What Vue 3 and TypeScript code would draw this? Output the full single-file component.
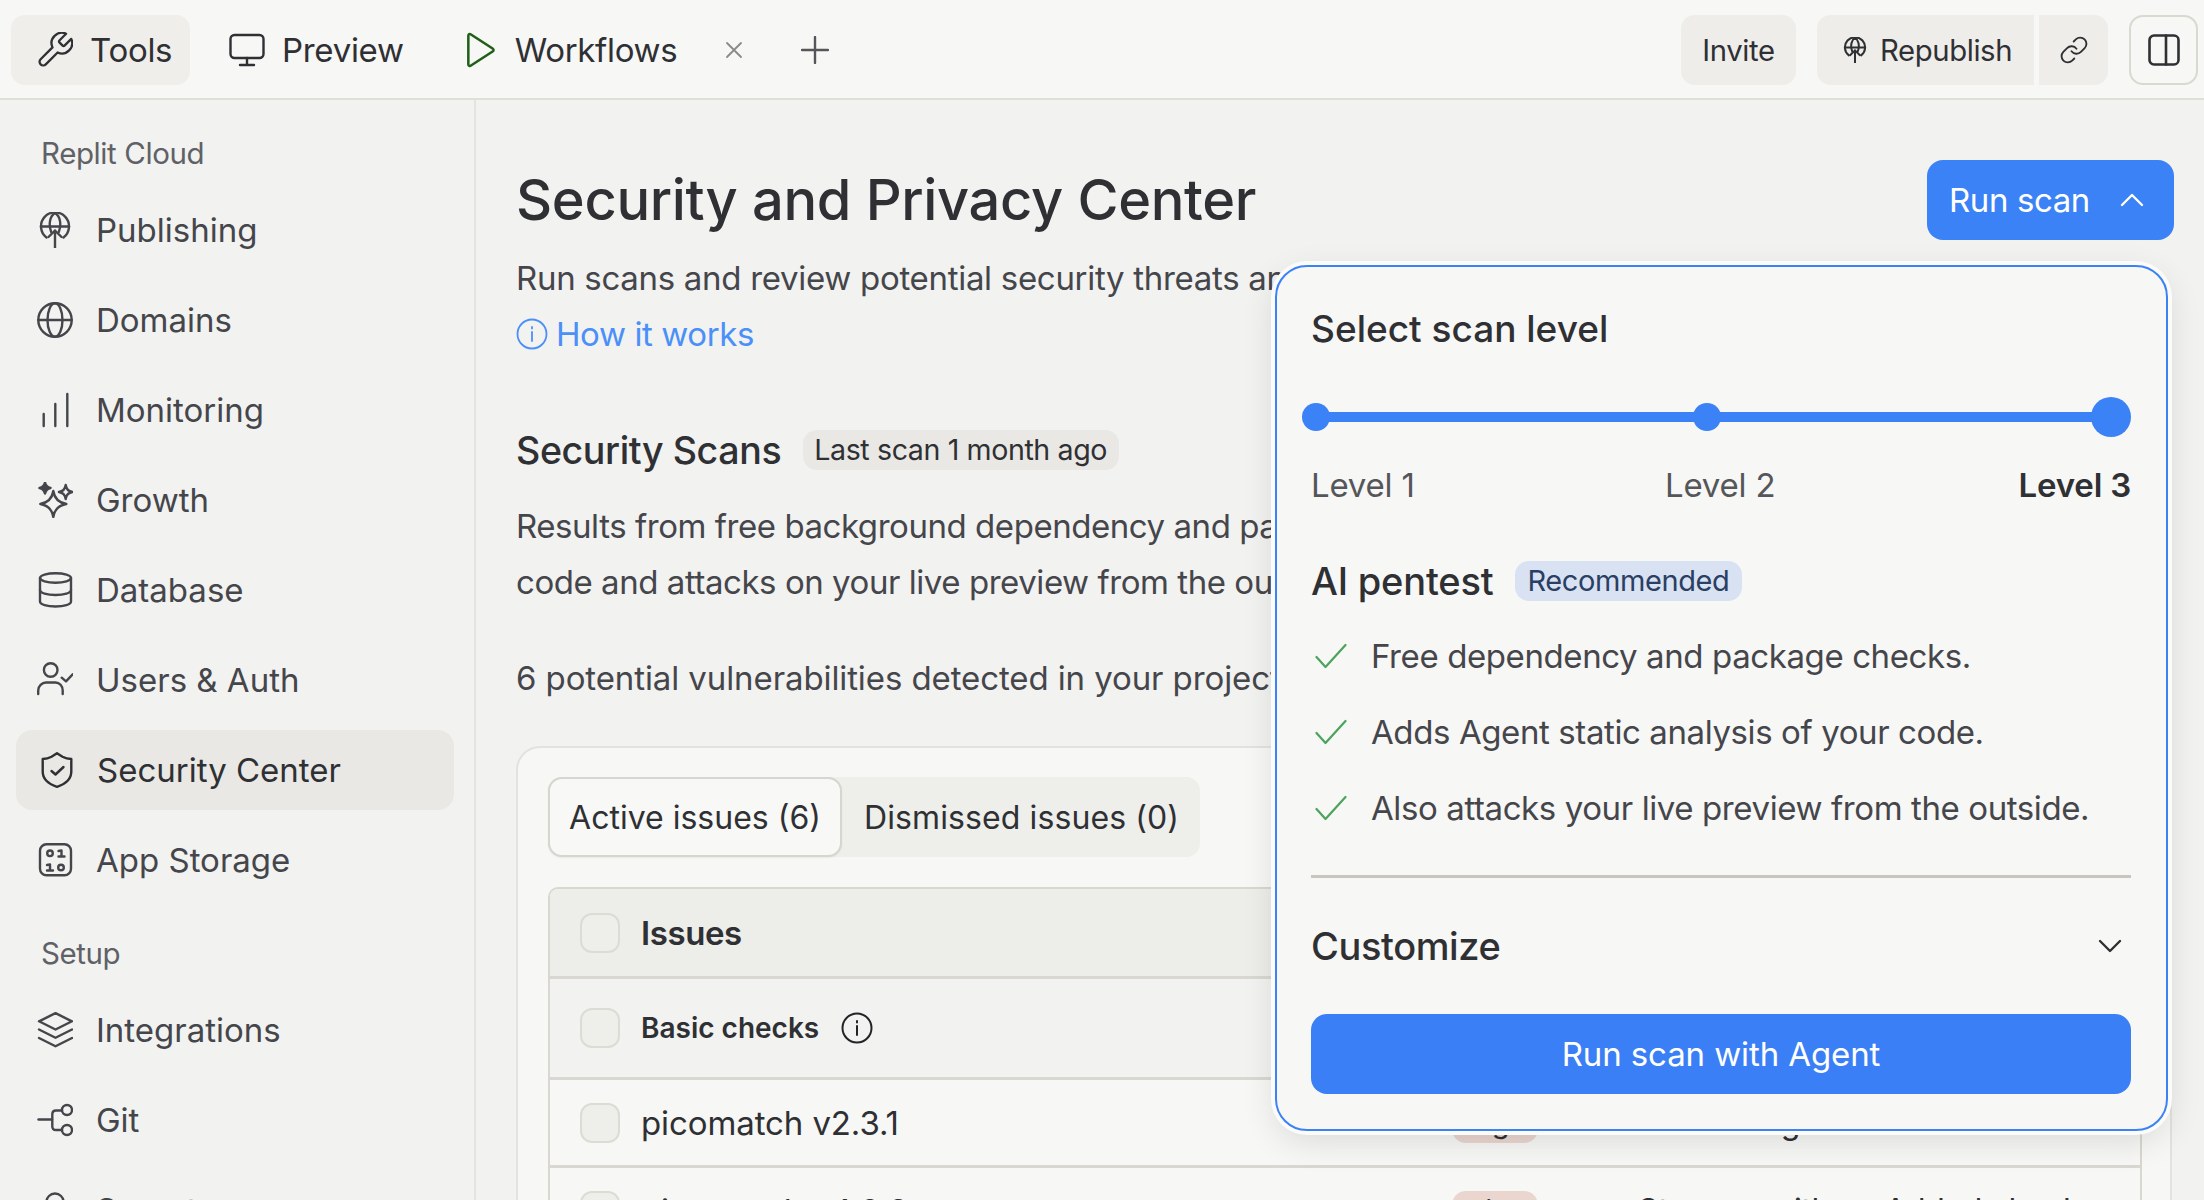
<script setup lang="ts">
type NavItem = { label: string; icon: string; active?: boolean }

const cloudItems: NavItem[] = [
  { label: 'Publishing', icon: 'publish' },
  { label: 'Domains', icon: 'globe' },
  { label: 'Monitoring', icon: 'bars' },
  { label: 'Growth', icon: 'sparkle' },
  { label: 'Database', icon: 'db' },
  { label: 'Users & Auth', icon: 'user' },
  { label: 'Security Center', icon: 'shield', active: true },
  { label: 'App Storage', icon: 'binary' },
]
const setupItems: NavItem[] = [
  { label: 'Integrations', icon: 'layers' },
  { label: 'Git', icon: 'git' },
  { label: 'Secrets', icon: 'key' },
]
const checks = [
  'Free dependency and package checks.',
  'Adds Agent static analysis of your code.',
  'Also attacks your live preview from the outside.',
]
</script>

<template>
  <div class="app">
    <header class="topbar">
      <nav class="tabs">
        <button class="tab tab-active">
          <svg class="ic36" viewBox="1.5 1.5 21 21"><path d="M14.7 6.3a1 1 0 0 0 0 1.4l1.6 1.6a1 1 0 0 0 1.4 0l3.77-3.77a6 6 0 0 1-7.94 7.94l-6.91 6.91a2.12 2.12 0 0 1-3-3l6.91-6.91a6 6 0 0 1 7.94-7.94l-3.76 3.76z" /></svg>
          <span>Tools</span>
        </button>
        <button class="tab tab-preview">
          <svg class="ic36" viewBox="0 0 36 36"><rect x="1.5" y="3" width="33" height="23" rx="4" /><path d="M18 26v7M11 33h14" /></svg>
          <span>Preview</span>
        </button>
        <button class="tab tab-workflows">
          <svg class="ic-play" viewBox="0 0 30 36"><path d="M3 4.5c0-1.5 1.3-2 2.5-1.2L26 16.6c1.2.8 1.2 2 0 2.8L5.5 32.7C4.3 33.5 3 33 3 31.5z" /></svg>
          <span>Workflows</span>
        </button>
        <svg class="ic-x" viewBox="0 0 18 18"><path d="M2 2l14 14M16 2L2 16" /></svg>
        <svg class="ic-plus" viewBox="0 0 28 28"><path d="M14 1v26M1 14h26" /></svg>
      </nav>
      <div class="actions">
        <button class="act invite">Invite</button>
        <div class="split">
          <button class="act republish">
            <svg class="ic-pub" viewBox="0 0 36 36"><use href="#i-publish" /></svg>
            <span>Republish</span>
          </button>
          <button class="act link">
            <svg class="ic-link" viewBox="0 0 24 24"><path d="M10 13a5 5 0 0 0 7.54.54l3-3a5 5 0 0 0-7.07-7.07l-1.72 1.71" /><path d="M14 11a5 5 0 0 0-7.54-.54l-3 3a5 5 0 0 0 7.07 7.07l1.71-1.71" /></svg>
          </button>
        </div>
        <button class="panel-btn">
          <svg class="ic-panel" viewBox="0 0 32 32"><rect x="1.5" y="1.5" width="29" height="29" rx="4.5" /><path d="M18 1.5v29" /></svg>
        </button>
      </div>
    </header>

    <svg class="defs" width="0" height="0" aria-hidden="true">
      <symbol id="i-publish" viewBox="0 0 36 36">
        <path d="M9.5 25.5A14 14 0 1 1 26.5 25.5" />
        <path d="M4 14.5h28" />
        <path d="M14.2 20C11.2 12 13 4 18 1M21.8 20C24.8 12 23 4 18 1" />
        <path d="M18 36V18.5M11.5 25l6.5-6.5 6.5 6.5" />
      </symbol>
      <symbol id="i-globe" viewBox="0 0 36 36">
        <circle cx="18" cy="18" r="16.7" />
        <ellipse cx="18" cy="18" rx="7.5" ry="16.7" />
        <path d="M1.3 18h33.4" />
      </symbol>
      <symbol id="i-bars" viewBox="0 0 36 36">
        <path d="M6.7 22v12M18.3 12v22M30.3 2v32" />
      </symbol>
      <symbol id="i-sparkle" viewBox="0 0 36 36">
        <path d="M16.3 9Q18 20 29.3 22 18 24 16.3 35 14.6 24 3.3 22 14.6 20 16.3 9Z" />
        <path class="fill" d="M8 0.5Q9 5 13.5 6 9 7 8 11.5 7 7 2.5 6 7 5 8 0.5Z" />
        <path d="M28.7 3Q29.6 9.2 35.5 10 29.6 10.8 28.7 17 27.8 10.8 21.9 10 27.8 9.2 28.7 3Z" />
      </symbol>
      <symbol id="i-db" viewBox="0 0 36 36">
        <ellipse cx="18.5" cy="6" rx="15.5" ry="4.7" />
        <path d="M3 6v23.5C3 32.5 10 34.5 18.5 34.5S34 32.5 34 29.5V6" />
        <path d="M3 18C3 21 10 23 18.5 23S34 21 34 18" />
      </symbol>
      <symbol id="i-user" viewBox="0 0 36 36">
        <circle cx="13.7" cy="8" r="6.8" />
        <path d="M1.2 32v-3.5C1.2 24 5 20.5 9 20.5h9.5c4 0 7.2 3.5 7.2 8V32" />
        <path d="M24.7 15.7l4.3 3.6 6.7-7" />
      </symbol>
      <symbol id="i-shield" viewBox="0 0 36 36">
        <path d="M18 1.2l5.5 3.6c2.5 1.4 5.5 2.2 8.8 2.2v12.5c0 8-6 12.6-14.3 15.3C9.7 32.1 3.7 27.5 3.7 19.5V7c3.3 0 6.3-.8 8.8-2.2z" />
        <path d="M12.5 19l4 3.5 8-7.5" />
      </symbol>
      <symbol id="i-binary" viewBox="0 0 36 36">
        <rect x="3" y="2.3" width="31" height="31" rx="6.5" />
        <circle cx="13" cy="11.3" r="2.8" />
        <circle cx="24" cy="25.5" r="2.8" />
        <path d="M21.5 9l3-.5V14M21.5 14.5h6M10 23l3-.5V28M10 28.5h6" />
      </symbol>
      <symbol id="i-layers" viewBox="0 0 36 36">
        <path d="M18.5 1.2L35 9.3 18.5 17.5 2 9.3Z" />
        <path d="M2 17.5l16.5 8.3L35 17.5M2 26l16.5 8.3L35 26" />
      </symbol>
      <symbol id="i-git" viewBox="0 0 36 36">
        <path d="M1.5 17.5H15" />
        <path d="M25 8.5h-6c-2.5 0-3.7 1.2-3.7 3.7v12c0 2.5 1.2 3.8 3.7 3.8h6" />
        <circle cx="30" cy="8" r="5" />
        <circle cx="30" cy="28" r="5" />
      </symbol>
      <symbol id="i-key" viewBox="0 0 36 36">
        <circle cx="18" cy="10" r="8.5" />
        <path d="M18 18.5v16M18 28h6" />
      </symbol>
    </svg>

    <div class="body">
      <aside class="sidebar">
        <div class="section">Replit Cloud</div>
        <a v-for="item in cloudItems" :key="item.label" class="item" :class="{ active: item.active }">
          <svg class="ic36" viewBox="0 0 36 36"><use :href="`#i-${item.icon}`" /></svg>
          <span>{{ item.label }}</span>
        </a>
        <div class="section setup">Setup</div>
        <a v-for="item in setupItems" :key="item.label" class="item">
          <svg class="ic36" viewBox="0 0 36 36"><use :href="`#i-${item.icon}`" /></svg>
          <span>{{ item.label }}</span>
        </a>
      </aside>

      <main class="main">
        <div class="heading">
          <h1>Security and Privacy Center</h1>
          <div class="scan-wrap">
            <button class="run">
              <span>Run scan</span>
              <svg class="ic-chev" viewBox="0 0 24 14"><path d="M2 12L12 2l10 10" /></svg>
            </button>
            <section class="popover">
              <h2 class="pop-title">Select scan level</h2>
              <div class="slider">
                <i class="dot" />
                <i class="dot mid" />
                <i class="dot big" />
              </div>
              <div class="levels">
                <span>Level 1</span>
                <span class="l2">Level 2</span>
                <b>Level 3</b>
              </div>
              <div class="ai">
                <h3>AI pentest</h3>
                <span class="rec">Recommended</span>
              </div>
              <ul class="checks">
                <li v-for="c in checks" :key="c">
                  <svg class="ic-check" viewBox="0 0 32 26"><path d="M1.5 14l9 10L30.5 2" /></svg>
                  <span>{{ c }}</span>
                </li>
              </ul>
              <hr class="divider" />
              <div class="customize">
                <span>Customize</span>
                <svg class="ic-down" viewBox="0 0 24 14"><path d="M2 2l10 10L22 2" /></svg>
              </div>
              <button class="agent">Run scan with Agent</button>
            </section>
          </div>
        </div>

        <p class="sub">Run scans and review potential security threats and privacy risks in your app.</p>
        <a class="how">
          <svg class="ic-info blue" viewBox="0 0 32 32"><circle cx="16" cy="16" r="14.5" /><path d="M16 14v9M16 9v1.5" /></svg>
          <span>How it works</span>
        </a>

        <div class="scans-head">
          <h2>Security Scans</h2>
          <span class="last">Last scan 1 month ago</span>
        </div>
        <p class="para">Results from free background dependency and package checks, plus Agent analysis of your<br />code and attacks on your live preview from the outside, appear below.</p>
        <p class="count">6 potential vulnerabilities detected in your project.</p>

        <section class="card">
          <div class="seg">
            <button class="seg-a">Active issues (6)</button>
            <button class="seg-b">Dismissed issues (0)</button>
          </div>
          <div class="table">
            <div class="row head">
              <i class="box" />
              <span class="name">Issues</span>
            </div>
            <div class="row group">
              <i class="box" />
              <span class="name">Basic checks</span>
              <svg class="ic-info" viewBox="0 0 32 32"><circle cx="16" cy="16" r="14.5" /><path d="M16 14v9M16 9v1.5" /></svg>
            </div>
            <div class="row item-row">
              <i class="box" />
              <span class="pkg">picomatch v2.3.1</span>
              <span class="sev">High</span>
              <span class="desc">Unsafe regex issue</span>
            </div>
            <div class="row item-row">
              <i class="box" />
              <span class="pkg">picomatch v4.0.3</span>
              <span class="sev">High</span>
              <span class="desc">Streams with no Added check</span>
            </div>
          </div>
        </section>
      </main>
    </div>
  </div>
</template>

<style>
html,
body {
  margin: 0;
  height: 100%;
  overflow: hidden;
}
</style>

<style scoped>
.app {
  width: 2204px;
  height: 1200px;
  overflow: hidden;
  display: flex;
  flex-direction: column;
  background: #f2f2f0;
  color: #2f3034;
  font-family: Inter, 'Liberation Sans', sans-serif;
  font-size: 32px;
  letter-spacing: -0.4px;
}
button {
  font: inherit;
  letter-spacing: inherit;
  color: inherit;
  border: 0;
  background: none;
  padding: 0;
}
svg {
  fill: none;
  stroke: currentColor;
  stroke-width: 2.4;
  stroke-linecap: round;
  stroke-linejoin: round;
  flex: none;
}
.defs {
  position: absolute;
}
.fill {
  fill: currentColor;
}
.ic36 {
  width: 36px;
  height: 36px;
}

/* top bar */
.topbar {
  height: 96px;
  flex: none;
  display: flex;
  align-items: center;
  justify-content: space-between;
  padding: 2px 6px 0 11px;
  background: #f7f7f5;
  border-bottom: 2px solid #dfdfd9;
}
.tabs,
.actions,
.split {
  display: flex;
  align-items: center;
}
.tab {
  height: 70px;
  display: flex;
  align-items: center;
  border-radius: 14px;
  font-size: 33px;
  letter-spacing: -0.3px;
}
.tab-active {
  width: 179px;
  padding-left: 26px;
  gap: 17px;
  background: #efeeeb;
}
.tab-preview {
  margin-left: 39px;
  gap: 17px;
}
.tab-workflows {
  margin-left: 62px;
  gap: 18px;
}
.tab-active .ic36 {
  stroke-width: 1.35;
}
.ic-play {
  width: 32px;
  height: 38px;
  margin-left: -1px;
  color: #1f5f16;
}
.ic-x {
  width: 18px;
  height: 18px;
  margin-left: 48px;
  color: #8a8a88;
  stroke-width: 1.8;
}
.ic-plus {
  width: 28px;
  height: 28px;
  margin-left: 58px;
  color: #55565a;
  stroke-width: 2.4;
}
.act {
  height: 70px;
  background: #eeedea;
  font-size: 29.3px;
  display: flex;
  align-items: center;
}
.invite {
  width: 115px;
  justify-content: center;
  border-radius: 14px;
}
.split {
  margin-left: 21px;
  gap: 5px;
}
.republish {
  width: 217px;
  padding-left: 25px;
  gap: 12px;
  border-radius: 14px 0 0 14px;
  box-sizing: border-box;
}
.ic-pub {
  width: 26px;
  height: 26px;
  stroke-width: 2.8;
}
.link {
  width: 69px;
  justify-content: center;
  border-radius: 0 14px 14px 0;
}
.ic-link {
  width: 30px;
  height: 30px;
  stroke-width: 1.5;
}
.panel-btn {
  margin-left: 21px;
  width: 69px;
  height: 70px;
  box-sizing: border-box;
  border: 2px solid #d9d8d1;
  border-radius: 14px;
  display: flex;
  align-items: center;
  justify-content: center;
}
.ic-panel {
  width: 32px;
  height: 32px;
  stroke-width: 2.6;
}

/* shell */
.body {
  flex: 1;
  display: flex;
  min-height: 0;
}
.sidebar {
  width: 476px;
  flex: none;
  box-sizing: border-box;
  padding: 33px 20px 0 16px;
  border-right: 2px solid #e3e3df;
  color: #45464b;
}
.section {
  height: 40px;
  line-height: 40px;
  padding-left: 25px;
  margin-bottom: 17px;
  font-size: 29.5px;
  color: #606166;
}
.setup {
  margin-top: 33px;
}
.item {
  height: 80px;
  margin-bottom: 10px;
  display: flex;
  align-items: center;
  gap: 23px;
  padding-left: 21px;
  border-radius: 16px;
  font-size: 33px;
  letter-spacing: 0;
}
.item.active {
  background: #e9e8e4;
  color: #2f3034;
  padding-left: 23px;
  gap: 22px;
}

/* main */
.main {
  flex: 1;
  min-width: 0;
  box-sizing: border-box;
  padding: 60px 32px 0 40px;
}
.heading {
  height: 80px;
  display: flex;
  align-items: center;
  justify-content: space-between;
}
h1 {
  margin: 0;
  font-size: 56px;
  font-weight: 500;
  letter-spacing: -0.33px;
}
.scan-wrap {
  position: relative;
  margin-right: -2px;
}
.run {
  width: 247px;
  height: 80px;
  box-sizing: border-box;
  padding: 0 30px 0 22px;
  background: #3b82f6;
  color: #fff;
  border-radius: 16px;
  font-size: 33px;
  display: flex;
  align-items: center;
  justify-content: space-between;
}
.ic-chev,
.ic-down {
  width: 24px;
  height: 14px;
}
.sub,
.para,
.count {
  margin: 0;
  line-height: 56px;
  font-size: 33px;
  color: #45464b;
  white-space: nowrap;
}
.sub {
  margin-top: 10px;
  letter-spacing: -0.3px;
}
.how {
  height: 56px;
  display: flex;
  align-items: center;
  gap: 8px;
  color: #4a90f8;
  font-size: 33px;
}
.ic-info {
  width: 32px;
  height: 32px;
  stroke-width: 2;
}
.blue {
  stroke-width: 1.8;
}
.scans-head {
  margin-top: 68px;
  height: 40px;
  display: flex;
  align-items: center;
  gap: 22px;
}
.scans-head h2 {
  margin: 0;
  font-size: 37.6px;
  font-weight: 500;
}
.last {
  height: 40px;
  line-height: 40px;
  padding: 0 12px 0 11px;
  background: #e9e8e4;
  border-radius: 14px;
  font-size: 28.6px;
}
.para {
  margin-top: 28px;
  letter-spacing: -0.45px;
}
.count {
  margin-top: 40px;
  letter-spacing: -0.1px;
}

.card {
  margin-top: 40px;
  height: 520px;
  box-sizing: border-box;
  padding: 29px 28px 0 30px;
  background: #f7f7f5;
  border: 2px solid #e3e3de;
  border-bottom: 0;
  border-radius: 24px 24px 0 0;
}
.seg {
  width: 652px;
  height: 80px;
  display: flex;
  background: #eeeeea;
  border-radius: 14px;
}
.seg-a {
  width: 294px;
  height: 80px;
  box-sizing: border-box;
  background: #f8f8f6;
  border: 2px solid #d6d5ce;
  border-radius: 14px;
  box-shadow: 0 1px 2px rgba(0, 0, 0, 0.06);
  letter-spacing: 0;
}
.seg-b {
  padding-left: 22px;
  letter-spacing: 0.1px;
}
.table {
  margin-top: 30px;
  border: 2px solid #d8d8d1;
  border-bottom: 0;
  border-radius: 10px 10px 0 0;
  overflow: hidden;
}
.row {
  display: flex;
  align-items: center;
  box-sizing: border-box;
  padding-left: 30px;
  border-bottom: 3px solid #d8d8d1;
}
.box {
  width: 40px;
  height: 40px;
  flex: none;
  box-sizing: border-box;
  margin-right: 21px;
  border: 2px solid #dcdcd5;
  border-radius: 12px;
  background: #eeeeea;
}
.head {
  height: 90px;
  background: #edede9;
}
.head .name {
  font-weight: 600;
  font-size: 33px;
}
.group {
  height: 101px;
  background: #f2f2f0;
}
.group .name {
  font-size: 28px;
  font-weight: 600;
  letter-spacing: 0;
  margin-right: 22px;
}
.group .ic-info {
  color: #222327;
}
.item-row {
  height: 88px;
}
.pkg {
  width: 811px;
  flex: none;
  font-size: 33px;
  letter-spacing: -0.1px;
}
.sev {
  height: 40px;
  line-height: 40px;
  width: 86px;
  text-align: center;
  background: #ead6cf;
  border-radius: 14px;
  font-size: 29px;
}
.desc {
  margin-left: 100px;
  white-space: nowrap;
}

/* popover */
.popover {
  position: absolute;
  z-index: 2;
  right: 6px;
  top: 105px;
  width: 893px;
  height: 866px;
  box-sizing: border-box;
  padding: 34px 35px 0 34px;
  background: #f7f7f5;
  border: 2px solid #3b82f6;
  border-radius: 32px;
  box-shadow: 0 0 0 4px #fbfbfa, 0 10px 34px rgba(0, 0, 0, 0.12);
}
.pop-title {
  margin: 0;
  height: 56px;
  line-height: 56px;
  font-size: 37px;
  font-weight: 500;
  letter-spacing: 0;
}
.slider {
  position: relative;
  margin: 40px 0 0 -9px;
  height: 40px;
  display: flex;
  align-items: center;
  justify-content: space-between;
}
.slider::before {
  content: '';
  position: absolute;
  left: 14px;
  right: 20px;
  top: 15px;
  height: 10px;
  background: #3b82f6;
}
.dot {
  position: relative;
  width: 28px;
  height: 28px;
  border-radius: 50%;
  background: #3b82f6;
}
.dot.mid {
  margin-right: 8px;
}
.dot.big {
  width: 40px;
  height: 40px;
}
.levels {
  margin-top: 26px;
  height: 44px;
  line-height: 44px;
  display: flex;
  justify-content: space-between;
  color: #55565a;
  font-size: 33px;
  letter-spacing: -0.2px;
}
.levels .l2 {
  margin-left: 7px;
}
.levels b {
  color: #2f3034;
  font-weight: 600;
}
.ai {
  margin-top: 54px;
  height: 40px;
  display: flex;
  align-items: center;
  gap: 22px;
}
.ai h3 {
  margin: 0;
  font-size: 38px;
  font-weight: 500;
  letter-spacing: -0.2px;
}
.rec {
  height: 40px;
  line-height: 40px;
  padding: 0 13px 0 12px;
  background: #d8e2f2;
  color: #2a3f63;
  border-radius: 14px;
  font-size: 29px;
}
.checks {
  list-style: none;
  margin: 27px 0 0;
  padding: 0;
  display: flex;
  flex-direction: column;
  gap: 20px;
}
.checks li {
  height: 56px;
  display: flex;
  align-items: center;
  gap: 24px;
  padding-left: 4px;
  color: #45464b;
  font-size: 33px;
}
.ic-check {
  width: 32px;
  height: 26px;
  color: #4ca35c;
  stroke-width: 2.2;
}
.divider {
  margin: 39px 0 0;
  height: 3px;
  border: 0;
  background: #c9c6bd;
}
.customize {
  margin-top: 40px;
  height: 56px;
  display: flex;
  align-items: center;
  justify-content: space-between;
  font-size: 38px;
  font-weight: 500;
}
.ic-down {
  margin-right: 9px;
}
.agent {
  margin-top: 40px;
  width: 100%;
  height: 80px;
  background: #3b7ff7;
  color: #fff;
  border-radius: 16px;
  font-size: 33px;
  letter-spacing: -0.1px;
}
</style>
